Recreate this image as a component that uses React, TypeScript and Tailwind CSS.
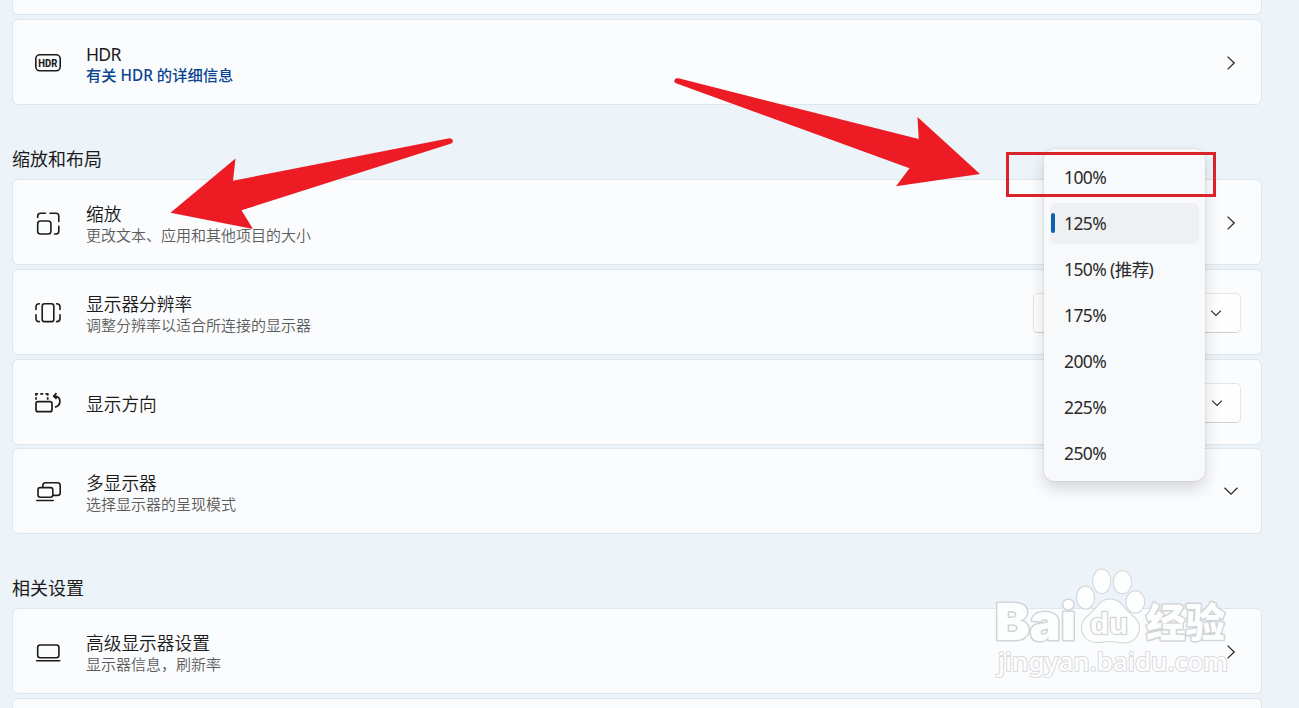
import type { ReactNode } from "react";

const HdrIcon = () => (
  <svg width="28" height="28" viewBox="0 0 28 28" fill="none" stroke="#1b1b1b" strokeWidth="1.6">
    <rect x="1.800" y="5.800" width="24.400" height="16" rx="4" />
    <text x="4.300" y="17.700" fontSize="10.5" fontWeight="800" fill="#1b1b1b" stroke="none" textLength="19" lengthAdjust="spacingAndGlyphs" fontFamily="Roboto, sans-serif">HDR</text>
  </svg>
);

const ScaleIcon = () => (
  <svg width="28" height="28" viewBox="0 0 28 28" fill="none" stroke="#1b1b1b" strokeWidth="1.6" strokeLinecap="round">
    <rect x="3.700" y="12" width="13.200" height="13" rx="2.800" />
    <path d="M3.700 8.500V7c0-1.700 1.100-2.800 2.800-2.800H11.500M16 4.200H22c1.700 0 2.800 1.100 2.800 2.800v5.500M24.800 17.300v4.900c0 1.700-1.100 2.800-2.800 2.800h-1.500" />
  </svg>
);

const ResolutionIcon = () => (
  <svg width="28" height="28" viewBox="0 0 28 28" fill="none" stroke="#1b1b1b" strokeWidth="1.6" strokeLinecap="round">
    <rect x="8.200" y="4.700" width="11.600" height="17.900" rx="2.400" />
    <path d="M5.400 4.700C3.300 4.700 2 5.800 2 7.800v2.700M2 15.800v3.700c0 2 1.300 3.100 3.400 3.100M22.600 4.700c2.100 0 3.400 1.100 3.400 3.100v2.700M26 15.800v3.700c0 2-1.300 3.100-3.400 3.100" />
  </svg>
);

const OrientationIcon = () => (
  <svg width="28" height="28" viewBox="0 0 28 28" fill="none" stroke="#1b1b1b" strokeWidth="1.700">
    <rect x="2" y="12.700" width="16" height="10" rx="2" />
    <path d="M2 10.800V8.200M2 6.700V4.800h2M6.300 4.800h2.900M11.500 4.800h2.200v1.900M13.700 8.200v2.600" />
    <path d="M20.500 7.200c3.500.3 5.400 2.200 5.400 5 0 3-1.900 5.200-4.900 5.900M22.500 4.200l-2.800 2.900 2.900 2.700" />
  </svg>
);

const MultiIcon = () => (
  <svg width="28" height="28" viewBox="0 0 28 28" fill="none" stroke="#1b1b1b" strokeWidth="1.600" strokeLinecap="round">
    <path d="M8.800 9V7.500c0-1.700 1-2.700 2.700-2.700h12c1.700 0 2.700 1 2.700 2.700v7.200c0 1.700-1 2.700-2.700 2.700h-4.200" />
    <rect x="4" y="9.600" width="14.800" height="9.600" rx="2.200" />
    <path d="M2.800 22.500h16.400" />
  </svg>
);

const LaptopIcon = () => (
  <svg width="28" height="28" viewBox="0 0 28 28" fill="none" stroke="#1b1b1b" strokeWidth="1.600" strokeLinecap="round">
    <rect x="3.700" y="7" width="21.200" height="12.800" rx="2.500" />
    <path d="M2.700 22.800h23" />
  </svg>
);

const ChevronRight = () => (
  <svg className="mt-[2px]" width="16" height="16" viewBox="0 0 16 16" fill="none" stroke="#2b2b2b" strokeWidth="1.300">
    <path d="M4.600 1.600l6.600 6.400-6.600 6.400" />
  </svg>
);

const ChevronDown = ({ small = false }: { small?: boolean }) => (
  <svg width={small ? 12 : 16} height={small ? 12 : 16} viewBox="0 0 16 16" fill="none" stroke="#2b2b2b" strokeWidth={small ? 1.600 : 1.300}>
    <path d="M1.500 4.800L8 11.200l6.500-6.400" />
  </svg>
);

type RowProps = {
  icon: ReactNode;
  title: string;
  sub?: string;
  link?: string;
  children?: ReactNode;
};

const Row = ({ icon, title, sub, link, children }: RowProps) => (
  <div className="flex h-[86px] shrink-0 items-center rounded-md border border-[#dde6ed] bg-[#fbfcfe] pl-[21px] pr-[22px]">
    <div className="mr-[24px] w-7 pt-px">{icon}</div>
    <div className={sub || link ? "flex-1 pt-[6px]" : "flex-1 pt-1"}>
      <div className={link ? "text-[17.600px] tracking-[-0.700px] leading-[21px] text-[#1b1b1b]" : "text-[17.700px] font-[350] leading-[21px] text-[#1b1b1b]"}>{title}</div>
      {sub && <div className="text-[15px] font-[350] leading-[21px] text-[#5c5c5c]">{sub}</div>}
      {link && <div className="text-[15.300px] font-medium leading-[21px] text-[#0a4590]">{link}</div>}
    </div>
    {children}
  </div>
);

const SelectBox = ({ narrow = false }: { narrow?: boolean }) => (
  <div className={`${narrow ? "w-[150px] pr-[17px]" : "w-[208px] pr-[18px]"} -mr-[2px] mt-[2px] flex h-10 items-center justify-end rounded-[5px] border border-[#e3e6e9] border-b-[#cdd0d3] bg-[#fefefe]`}>
    <ChevronDown small />
  </div>
);

const options = ["100%", "125%", "150% (推荐)", "175%", "200%", "225%", "250%"];

const ScaleMenu = () => (
  <div className="absolute left-[1044px] top-[149px] h-[332px] w-[161px] rounded-[10px] bg-[#f8f9fb] pt-[5px] shadow-[0_0_2px_rgba(0,0,0,0.15),0_8px_16px_rgba(0,0,0,0.15)]">
    {options.map((option) => (
      <div key={option} className="flex h-[46px] items-center px-[6px]">
        <div className={option === "125%" ? "flex h-[41px] w-full items-center rounded-md bg-[#eff0f2]" : "flex h-[41px] w-full items-center"}>
          <div className={option === "125%" ? "ml-px h-5 w-1 rounded-full bg-[#0b62b0]" : "ml-px h-5 w-1"} />
          <span className="ml-[9px] pt-px text-[17.500px] tracking-[-0.600px] text-[#2b2b2b]">{option}</span>
        </div>
      </div>
    ))}
  </div>
);

const Arrows = () => (
  <svg className="pointer-events-none absolute left-0 top-0" width="1299" height="708" fill="#ed1c24">
    <path d="M170.500 212.700L235.500 158.500 233 180.700 449.500 138.200C453.500 138 454 143 450.500 143.700L241.500 210.300 253 229Z" />
    <path d="M980 174L917.500 117 918.700 139 678.500 78.300C674 77.500 673 82 676 83.300L909.500 168.200 896 186.300Z" />
  </svg>
);

const Watermark = () => (
  <svg className="pointer-events-none absolute left-[980px] top-[550px]" width="270" height="140" stroke="#d2d5d8" strokeWidth="2" fill="#fdfefe" paintOrder="stroke" strokeLinejoin="round">
    <ellipse cx="105.500" cy="47.500" rx="8.600" ry="11" />
    <ellipse cx="121.700" cy="31.200" rx="8.600" ry="11.700" />
    <ellipse cx="142.500" cy="32.300" rx="8.800" ry="11" />
    <ellipse cx="155.300" cy="52" rx="9" ry="10.700" />
    <text x="15" y="90" fontSize="51" fontWeight="900" textLength="81" lengthAdjust="spacingAndGlyphs" fontFamily="Inter, Liberation Sans, sans-serif" strokeWidth="3">Bai</text>
    <path d="M130 49.500c-7 0-11 5-15 10-5 6-13 9-13 18 0 9 7 14.500 15 14.500 5 0 8-1 13-1s9 1.500 14 1.500c8 0 15-6 15-14.500 0-9-8-12-13-18-4-5-8-10.500-16-10.500z" />
    <text x="110" y="84" fontSize="29" textLength="38" lengthAdjust="spacingAndGlyphs" fontFamily="Liberation Sans, sans-serif" fontWeight="700" strokeWidth="2.500">du</text>
    <text x="166" y="87" fontSize="39.500" fontWeight="900" fontFamily="Noto Sans CJK SC, sans-serif" strokeWidth="3">经验</text>
    <text x="18" y="121" fontSize="26" fontWeight="500" textLength="230" lengthAdjust="spacingAndGlyphs" fontFamily="Noto Sans, sans-serif" stroke="#d8dadd" strokeWidth="2">jingyan.baidu.com</text>
  </svg>
);

export default function App() {
  return (
    <main className="relative h-[708px] w-[1299px] overflow-hidden bg-[#ecf3f9] font-['Noto_Sans','Noto_Sans_CJK_SC',sans-serif]">
      <div className="flex w-[1262px] flex-col pl-3">
        <div className="h-[15px] rounded-b-md border border-t-0 border-[#dde6ed] bg-[#fbfcfe]" />
        <div className="mt-1">
          <Row icon={<HdrIcon />} title="HDR" link="有关 HDR 的详细信息">
            <ChevronRight />
          </Row>
        </div>

        <h2 className="mt-[42px] h-[32px] text-[18px] leading-[24px] text-[#1b1b1b]">缩放和布局</h2>
        <div className="flex flex-col gap-1">
          <Row icon={<ScaleIcon />} title="缩放" sub="更改文本、应用和其他项目的大小">
            <ChevronRight />
          </Row>
          <Row icon={<ResolutionIcon />} title="显示器分辨率" sub="调整分辨率以适合所连接的显示器">
            <SelectBox />
          </Row>
          <Row icon={<OrientationIcon />} title="显示方向">
            <SelectBox narrow />
          </Row>
          <div className="-mt-px">
            <Row icon={<MultiIcon />} title="多显示器" sub="选择显示器的呈现模式">
              <ChevronDown />
            </Row>
          </div>
        </div>

        <h2 className="mt-[42px] h-[32px] text-[18px] leading-[24px] text-[#1b1b1b]">相关设置</h2>
        <div className="flex flex-col gap-1">
          <Row icon={<LaptopIcon />} title="高级显示器设置" sub="显示器信息，刷新率">
            <ChevronRight />
          </Row>
          <div className="h-10 rounded-md border border-[#dde6ed] bg-[#fbfcfe]" />
        </div>
      </div>

      <ScaleMenu />
      <div className="absolute left-[1006px] top-[152px] h-[45px] w-[210px] border-[3px] border-[#d8232a]" />
      <Arrows />
      <Watermark />
    </main>
  );
}
